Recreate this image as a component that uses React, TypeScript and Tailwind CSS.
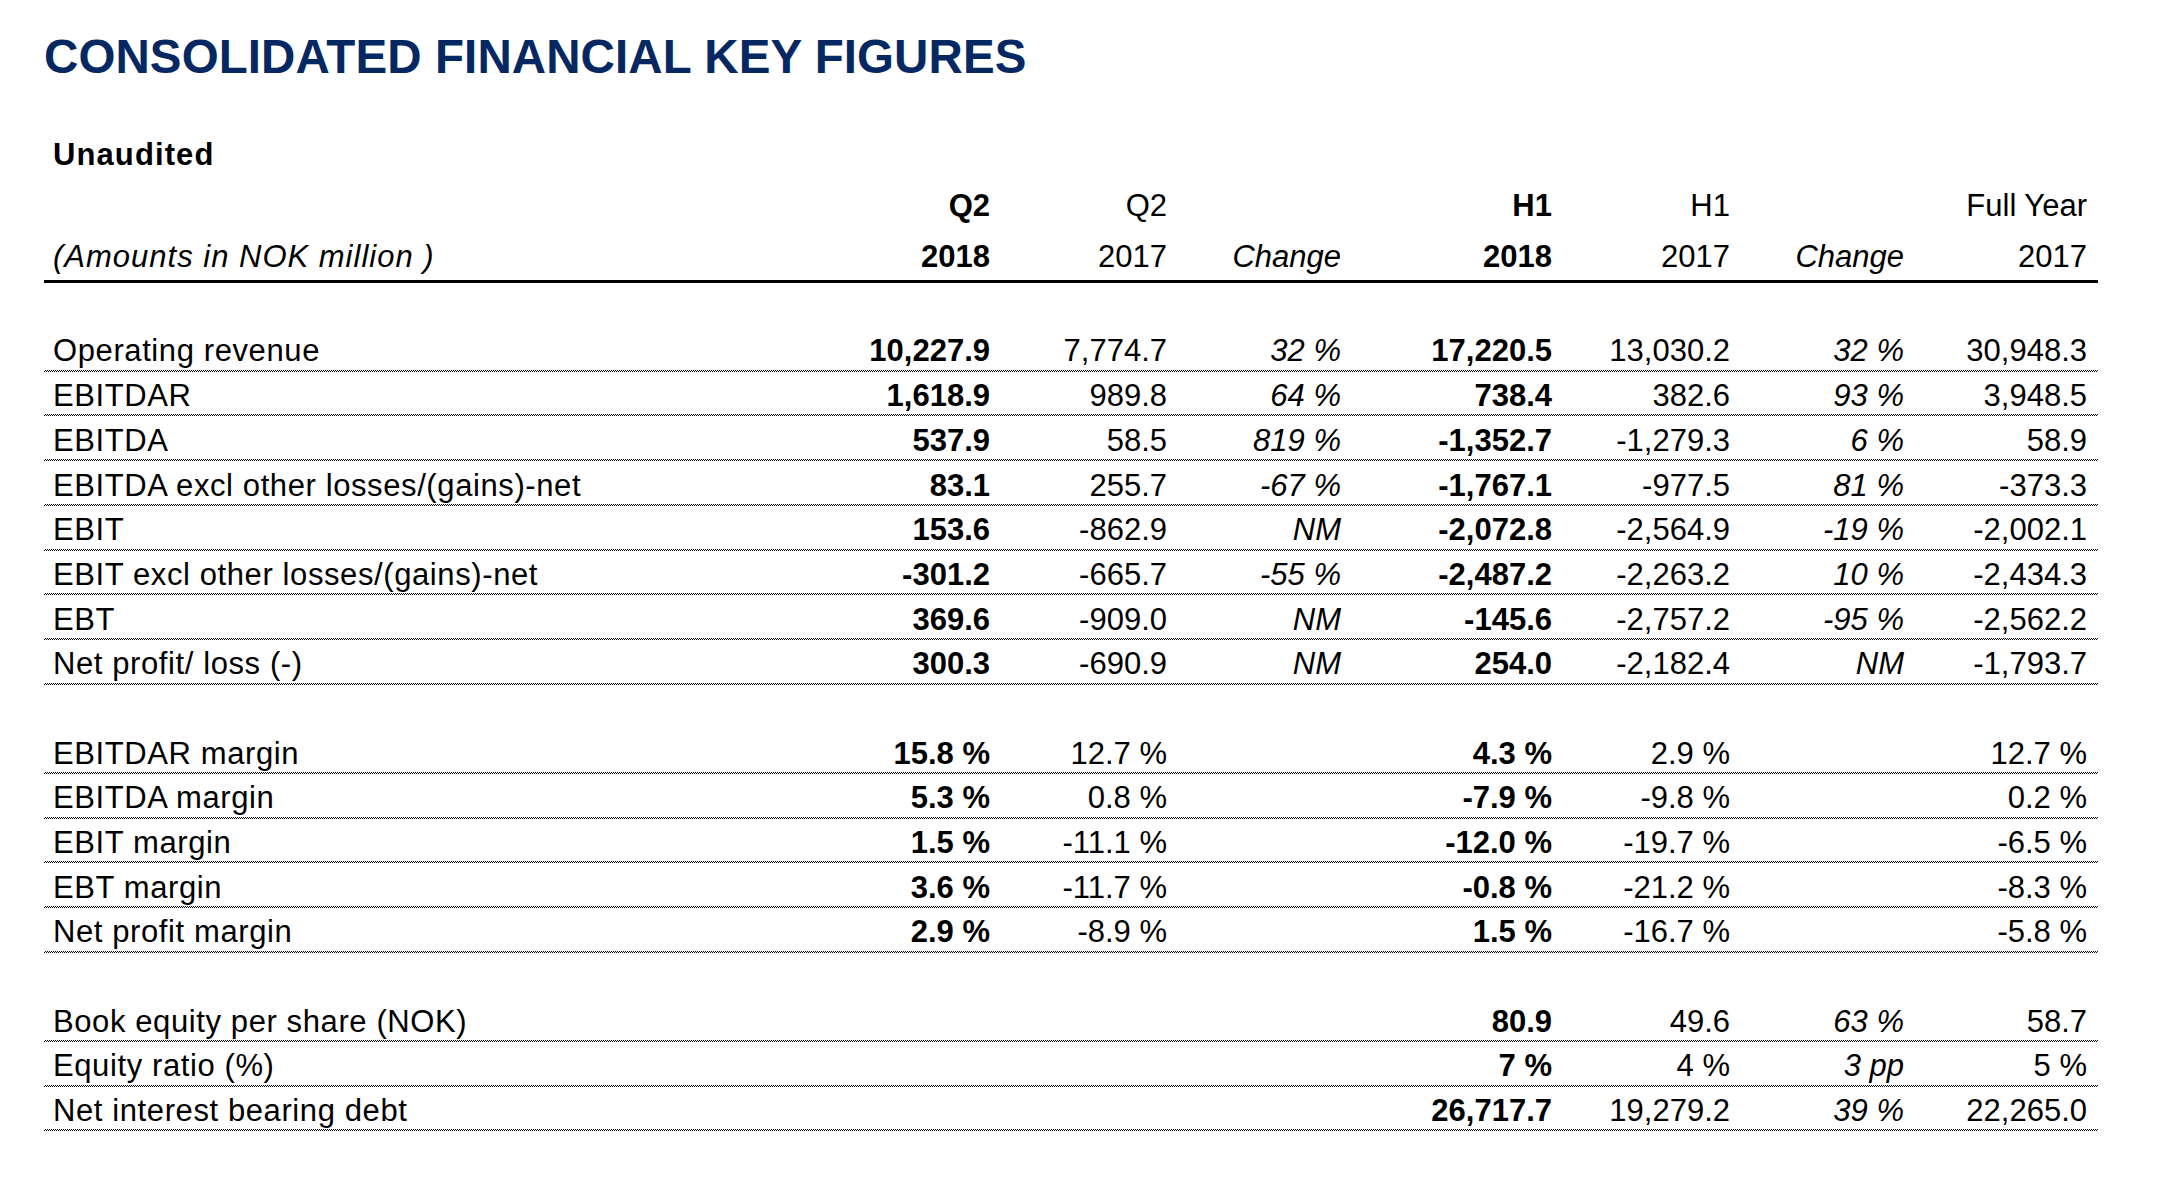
// Consolidated financial key figures table (quarterly report page)

type Cell = string;
type Row = { label: string; values: Cell[] };

const GRID = 'grid grid-cols-[767px_170px_177px_174px_211px_178px_174px_183px] pl-[9px] pr-[11px]';

// which numeric columns are bold / italic
const BOLD_COLS = [0, 3];
const ITALIC_COLS = [2, 5];

const results: Row[] = [
  { label: 'Operating revenue', values: ['10,227.9', '7,774.7', '32 %', '17,220.5', '13,030.2', '32 %', '30,948.3'] },
  { label: 'EBITDAR', values: ['1,618.9', '989.8', '64 %', '738.4', '382.6', '93 %', '3,948.5'] },
  { label: 'EBITDA', values: ['537.9', '58.5', '819 %', '-1,352.7', '-1,279.3', '6 %', '58.9'] },
  { label: 'EBITDA excl other losses/(gains)-net', values: ['83.1', '255.7', '-67 %', '-1,767.1', '-977.5', '81 %', '-373.3'] },
  { label: 'EBIT', values: ['153.6', '-862.9', 'NM', '-2,072.8', '-2,564.9', '-19 %', '-2,002.1'] },
  { label: 'EBIT excl other losses/(gains)-net', values: ['-301.2', '-665.7', '-55 %', '-2,487.2', '-2,263.2', '10 %', '-2,434.3'] },
  { label: 'EBT', values: ['369.6', '-909.0', 'NM', '-145.6', '-2,757.2', '-95 %', '-2,562.2'] },
  { label: 'Net profit/ loss (-)', values: ['300.3', '-690.9', 'NM', '254.0', '-2,182.4', 'NM', '-1,793.7'] },
];

const margins: Row[] = [
  { label: 'EBITDAR margin', values: ['15.8 %', '12.7 %', '', '4.3 %', '2.9 %', '', '12.7 %'] },
  { label: 'EBITDA margin', values: ['5.3 %', '0.8 %', '', '-7.9 %', '-9.8 %', '', '0.2 %'] },
  { label: 'EBIT margin', values: ['1.5 %', '-11.1 %', '', '-12.0 %', '-19.7 %', '', '-6.5 %'] },
  { label: 'EBT margin', values: ['3.6 %', '-11.7 %', '', '-0.8 %', '-21.2 %', '', '-8.3 %'] },
  { label: 'Net profit margin', values: ['2.9 %', '-8.9 %', '', '1.5 %', '-16.7 %', '', '-5.8 %'] },
];

const balance: Row[] = [
  { label: 'Book equity per share (NOK)', values: ['', '', '', '80.9', '49.6', '63 %', '58.7'] },
  { label: 'Equity ratio (%)', values: ['', '', '', '7 %', '4 %', '3 pp', '5 %'] },
  { label: 'Net interest bearing debt', values: ['', '', '', '26,717.7', '19,279.2', '39 %', '22,265.0'] },
];

function DataRow({ row }: { row: Row }) {
  return (
    <div className="flex flex-col">
      <div className={`${GRID} h-[42.7px] pt-[5px] items-center leading-none`}>
        <span className="tracking-[0.6px]">{row.label}</span>
        {row.values.map((v, i) => (
          <span
            key={i}
            className={`text-right ${BOLD_COLS.includes(i) ? 'font-bold' : ''} ${ITALIC_COLS.includes(i) ? 'italic' : ''}`}
          >
            {v}
          </span>
        ))}
      </div>
      {/* fine checkered rule under each line */}
      <div className="h-[2px] bg-[conic-gradient(#000_90deg,transparent_90deg_180deg,#000_180deg_270deg,transparent_270deg)] bg-[length:2px_2px]" />
    </div>
  );
}

function Group({ rows }: { rows: Row[] }) {
  return (
    <div className="flex flex-col">
      {rows.map((r) => (
        <DataRow key={r.label} row={r} />
      ))}
    </div>
  );
}

export default function App() {
  return (
    <div className="min-h-screen bg-white text-black font-['Liberation_Sans',Arial,sans-serif]">
      <div className="w-[2054px] ml-[44px] pt-[33px]">
        <h1 className="text-[47.5px] leading-none font-bold text-[#062862] tracking-[0.1px]">CONSOLIDATED FINANCIAL KEY FIGURES</h1>

        <div className="mt-[50px] text-[31px]">
          <div className={`${GRID} h-[49px] pt-[1px] items-center`}>
            <span className="font-bold tracking-[1.1px]">Unaudited</span>
          </div>

          <div className={`${GRID} h-[49px] pt-[3px] items-center`}>
            <span />
            <span className="text-right font-bold">Q2</span>
            <span className="text-right">Q2</span>
            <span />
            <span className="text-right font-bold">H1</span>
            <span className="text-right">H1</span>
            <span />
            <span className="text-right">Full Year</span>
          </div>

          <div className={`${GRID} h-[49px] pt-[5px] items-center`}>
            <span className="italic tracking-[1px]">(Amounts in NOK million )</span>
            <span className="text-right font-bold">2018</span>
            <span className="text-right">2017</span>
            <span className="text-right italic">Change</span>
            <span className="text-right font-bold">2018</span>
            <span className="text-right">2017</span>
            <span className="text-right italic">Change</span>
            <span className="text-right">2017</span>
          </div>

          <div className="mt-[2px] h-[3px] bg-black" />

          <div className="h-[44.6px]" />
          <Group rows={results} />

          <div className="h-[44.7px]" />
          <Group rows={margins} />

          <div className="h-[44.7px]" />
          <Group rows={balance} />
        </div>
      </div>
    </div>
  );
}
